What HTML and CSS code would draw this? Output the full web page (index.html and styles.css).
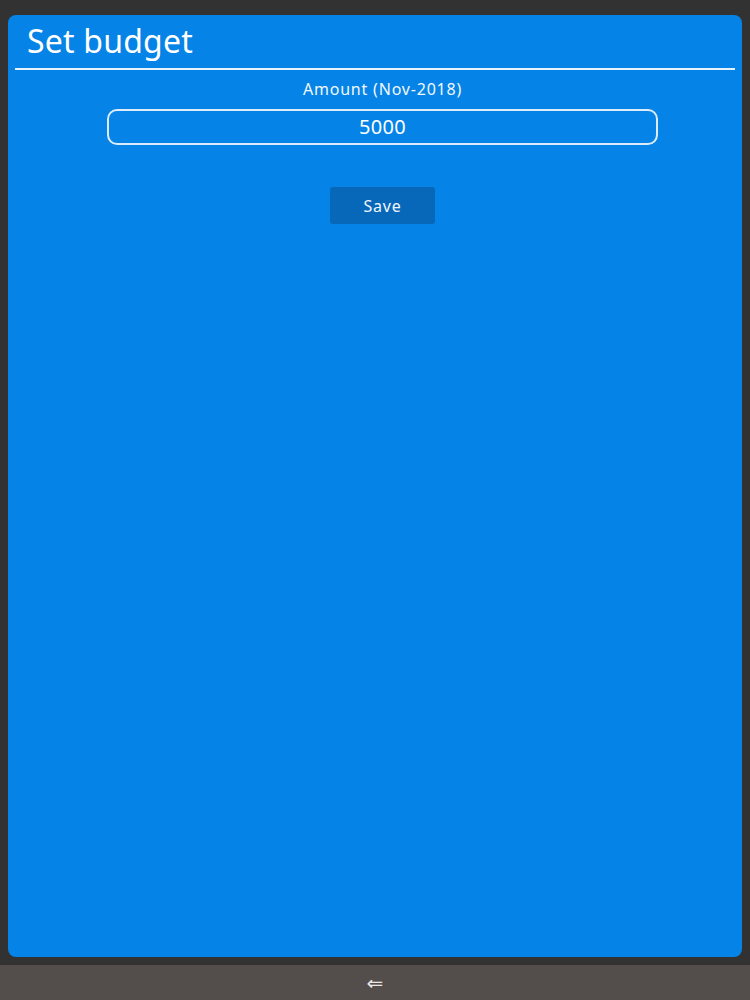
FILE: index.html
```html
<!DOCTYPE html>
<html>
<head>
<meta charset="utf-8">
<link rel="stylesheet" href="styles.css">
</head>
<body>
<div class="screen">
  <div class="panel">
    <div class="header">
      <h1 class="title">Set budget</h1>
    </div>
    <div class="form">
      <label class="label">Amount (Nov-2018)</label>
      <div class="input">5000</div>
      <button class="save">Save</button>
    </div>
  </div>
  <div class="navbar"><span class="back">&#8656;</span></div>
</div>
</body>
</html>
```
FILE: styles.css
```css
html, body {
  margin: 0;
  padding: 0;
  background: #333232;
  font-family: "Noto Sans", "Open Sans", sans-serif;
}
.screen {
  height: 1000px;
  display: flex;
  flex-direction: column;
}
.panel {
  flex: 1;
  margin: 15px 8px 8px 8px;
  background: #0583e6;
  border-radius: 8px;
  color: #fff;
  display: flex;
  flex-direction: column;
}
.header {
  margin: 0 7px;
  border-bottom: 2px solid #e6f2fc;
  padding: 7px 12px 8px;
}
.title {
  margin: 0;
  font-size: 32px;
  font-weight: 400;
  line-height: 38px;
  letter-spacing: 0.2px;
}
.form {
  display: flex;
  flex-direction: column;
  align-items: center;
  padding-top: 9px;
  padding-left: 15px;
}
.label {
  font-size: 16px;
  line-height: 20px;
  letter-spacing: 0.8px;
  color: #f2f8fd;
}
.input {
  margin-top: 10px;
  width: 547px;
  height: 32px;
  border: 2px solid #dcecfb;
  border-radius: 10px;
  text-align: center;
  font-size: 20px;
  line-height: 32px;
  letter-spacing: 0.3px;
}
.save {
  margin-top: 42px;
  width: 105px;
  height: 37px;
  background: #0768b9;
  border: none;
  border-radius: 3px;
  color: #f0f6fc;
  font-family: inherit;
  font-size: 16px;
  letter-spacing: 0.8px;
}
.navbar {
  height: 35px;
  background: #534d4c;
  display: flex;
  align-items: center;
  justify-content: center;
}
.back {
  color: #e8e6e6;
  font-size: 20px;
  line-height: 1;
  font-family: "DejaVu Sans", sans-serif;
}
```
